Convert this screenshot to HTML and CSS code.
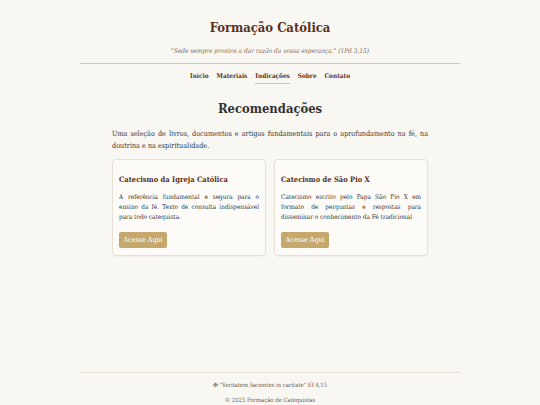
FILE: index.html
```html
<!DOCTYPE html>
<html lang="pt">
<head>
<meta charset="utf-8">
<title>Formação Católica</title>
<link rel="stylesheet" href="styles.css">
</head>
<body>
<div class="page">
  <header class="header">
    <h1 class="site-title">Formação Católica</h1>
    <p class="motto">"Sede sempre prontos a dar razão da vossa esperança." (1Pd 3,15)</p>
  </header>
  <nav class="nav">
    <a class="nav-link" href="#">Início</a>
    <a class="nav-link" href="#">Materiais</a>
    <a class="nav-link active" href="#">Indicações</a>
    <a class="nav-link" href="#">Sobre</a>
    <a class="nav-link" href="#">Contato</a>
  </nav>
  <main class="main">
    <h2 class="page-title">Recomendações</h2>
    <p class="intro">Uma seleção de livros, documentos e artigos fundamentais para o aprofundamento na fé, na doutrina e na espiritualidade.</p>
    <div class="cards">
      <div class="card">
        <h3 class="card-title">Catecismo da Igreja Católica</h3>
        <p class="card-text">A referência fundamental e segura para o ensino da fé. Texto de consulta indispensável para todo catequista.</p>
        <a class="btn" href="#">Acesse Aqui</a>
      </div>
      <div class="card">
        <h3 class="card-title">Catecismo de São Pio X</h3>
        <p class="card-text">Catecismo escrito pelo Papa São Pio X em formato de perguntas e respostas para disseminar o conhecimento da Fé tradicional</p>
        <a class="btn" href="#">Acesse Aqui</a>
      </div>
    </div>
  </main>
  <footer class="footer">
    <p class="footer-line">✠ "Veritatem facientes in caritate" Ef 4,15</p>
    <p class="footer-line">© 2025 Formação de Catequistas</p>
  </footer>
</div>
</body>
</html>
```

FILE: styles.css
```css
* { box-sizing: border-box; }
html, body { margin: 0; padding: 0; }
body {
  background: #f9f7f2;
  font-family: "DejaVu Serif", "Liberation Serif", serif;
  font-stretch: condensed;
  color: #333;
}
.page {
  width: 380px;
  margin: 0 auto;
  min-height: 405px;
  display: flex;
  flex-direction: column;
}
.header {
  text-align: center;
  padding-top: 18px;
  padding-bottom: 7px;
  border-bottom: 1px solid #cfc8bd;
}
.site-title {
  margin: 0;
  font-size: 12.9px;
  line-height: 20px;
  font-weight: bold;
  color: #5a3020;
}
.motto {
  margin: 9px 0 0;
  font-size: 6.5px;
  line-height: 9px;
  font-style: italic;
  color: #7d6a5c;
}
.nav {
  display: flex;
  justify-content: center;
  gap: 8px;
  padding-top: 7px;
}
.nav-link {
  font-size: 6.4px;
  line-height: 11px;
  font-weight: bold;
  color: #5a3020;
  text-decoration: none;
  padding-bottom: 1px;
  border-bottom: 1.5px solid transparent;
}
.nav-link.active { border-bottom-color: #d7c39a; }
.main {
  padding: 0 32px;
}
.page-title {
  margin: 14px 0 0;
  text-align: center;
  font-size: 12.9px;
  line-height: 22px;
  font-weight: bold;
  color: #333;
}
.intro {
  margin: 8px 0 0;
  font-size: 7.2px;
  line-height: 11.5px;
  text-align: justify;
  color: #333;
}
.cards {
  display: grid;
  grid-template-columns: 1fr 1fr;
  gap: 8px;
  margin-top: 8px;
}
.card {
  display: flex;
  flex-direction: column;
  align-items: flex-start;
  background: #fdfbf7;
  border: 1px solid #e6e0d5;
  border-radius: 4px;
  padding: 13px 6px 7px;
  box-shadow: 0 1px 2px rgba(0,0,0,0.04);
}
.card-title {
  margin: 0;
  font-size: 7.5px;
  line-height: 13px;
  font-weight: bold;
  color: #5a3020;
}
.card-text {
  margin: 6px 0 0;
  font-size: 6.4px;
  line-height: 10px;
  text-align: justify;
  color: #333;
}
.btn {
  display: block;
  margin-top: 10px;
  background: #c4a86c;
  color: #fff;
  font-size: 7.1px;
  line-height: 16px;
  padding: 0 4.5px;
  border-radius: 2px;
  text-decoration: none;
}
.footer {
  margin-top: auto;
  border-top: 1px solid #e4ded3;
  text-align: center;
  padding: 7px 0 0;
}
.footer-line {
  margin: 0 0 5px;
  font-size: 5.9px;
  line-height: 10px;
  color: #6b5b4e;
}
.footer-line:last-child { margin-bottom: 0; }
```
